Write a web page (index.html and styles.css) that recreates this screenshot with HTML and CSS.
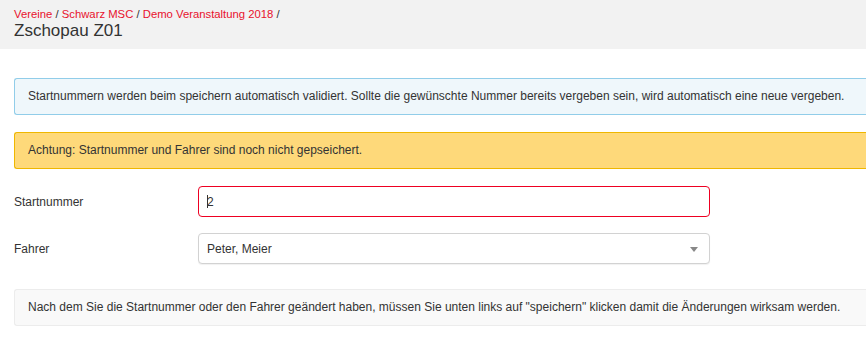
FILE: index.html
```html
<!DOCTYPE html>
<html lang="de">
<head>
    <meta charset="UTF-8">
    <meta name="viewport" content="width=device-width, initial-scale=1.0">
    <title>Zschopau Z01</title>
    <link rel="stylesheet" href="styles.css">
</head>
<body>
    <header class="page-header">
        <nav class="breadcrumb">
            <a href="#">Vereine</a> / <a href="#">Schwarz MSC</a> / <a href="#">Demo Veranstaltung 2018</a> /
        </nav>
        <h1>Zschopau Z01</h1>
    </header>
    <main class="content">
        <div class="alert alert-info">Startnummern werden beim speichern automatisch validiert. Sollte die gewünschte Nummer bereits vergeben sein, wird automatisch eine neue vergeben.</div>
        <div class="alert alert-warning">Achtung: Startnummer und Fahrer sind noch nicht gepseichert.</div>

        <div class="form-row">
            <label for="startnummer">Startnummer</label>
            <div class="field field-error"><span class="caret"></span>2</div>
        </div>
        <div class="form-row">
            <label for="fahrer">Fahrer</label>
            <div class="field field-select">Peter, Meier<span class="arrow"></span></div>
        </div>

        <div class="well">Nach dem Sie die Startnummer oder den Fahrer geändert haben, müssen Sie unten links auf "speichern" klicken damit die Änderungen wirksam werden.</div>
    </main>
</body>
</html>
```

FILE: styles.css
```css
body {
    font-family: 'Liberation Sans', Arial, sans-serif;
    font-size: 12px;
    color: #333;
    margin: 0;
    padding: 0;
    background-color: #fff;
}

.page-header {
    background-color: #f2f2f2;
    height: 49px;
    padding: 7px 14px 0;
    box-sizing: border-box;
}

.breadcrumb {
    font-size: 11.3px;
    line-height: 14px;
    color: #333;
}

.breadcrumb a {
    color: #e8112d;
    text-decoration: none;
}

.page-header h1 {
    margin: 0;
    font-size: 17px;
    font-weight: normal;
    line-height: 20px;
    color: #333;
}

/* the boxes run on past the right edge of the window */
.content {
    padding: 29px 0 0 14px;
}

.alert {
    padding: 9px 13px;
    line-height: 17px;
    border: 1px solid;
    border-right: none;
    border-radius: 3px 0 0 3px;
    margin-bottom: 17px;
}

.alert-info {
    background-color: #eff7fb;
    border-color: #91cde9;
}

.alert-warning {
    background-color: #fed97a;
    border-color: #efb700;
}

.form-row {
    display: flex;
    align-items: center;
    margin-bottom: 16px;
}

.form-row label {
    width: 184px;
}

.field {
    width: 512px;
    height: 31px;
    box-sizing: border-box;
    padding: 0 8px;
    display: flex;
    align-items: center;
    border: 1px solid #d2d2d2;
    border-radius: 4px;
    background-color: #fff;
    position: relative;
}

.field-error {
    border-color: #ee0022;
}

.caret {
    display: inline-block;
    width: 1px;
    height: 13px;
    background-color: #333;
    margin-right: -1px;
}

.field-select {
    box-shadow: 0 1px 1px rgba(0, 0, 0, 0.06);
}

.arrow {
    position: absolute;
    right: 11px;
    top: 13px;
    border-left: 4px solid transparent;
    border-right: 4px solid transparent;
    border-top: 5px solid #888;
}

.well {
    margin-top: 25px;
    padding: 9px 13px;
    line-height: 17px;
    background-color: #f9f9f9;
    border: 1px solid #ececec;
    border-right: none;
    border-radius: 3px 0 0 3px;
}
```
